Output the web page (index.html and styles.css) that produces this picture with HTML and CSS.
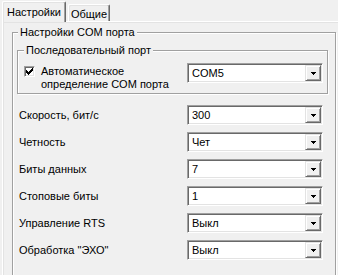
FILE: index.html
```html
<!DOCTYPE html>
<html lang="ru">
<head>
<meta charset="utf-8">
<title>Настройки COM порта</title>
<link rel="stylesheet" href="styles.css">
</head>
<body>
<div class="window">
  <div class="tabs">
    <div class="tab active">Настройки</div>
    <div class="tab">Общие</div>
  </div>
  <div class="panel">
    <fieldset class="group outer">
      <legend>Настройки COM порта</legend>
      <fieldset class="group inner">
        <legend>Последовательный порт</legend>
        <div class="port-row">
          <label class="check">
            <span class="box"><svg width="7" height="7" viewBox="0 0 7 7"><path d="M0 2h1v1h1v1h1v-1h1v-1h1v-1h1v-1h1v3h-1v1h-1v1h-1v1h-1v1h-1v-1h-1v-1h-1z" fill="#000"/></svg></span>
            <span class="check-text">Автоматическое<br>определение COM порта</span>
          </label>
          <div class="combo"><span class="value">COM5</span><span class="btn"><svg width="5" height="3" viewBox="0 0 5 3"><path d="M0 0h5v1h-1v1h-1v1h-1v-1h-1v-1h-1z" fill="#000"/></svg></span></div>
        </div>
      </fieldset>
      <div class="rows">
        <div class="row"><span class="label">Скорость, бит/с</span><div class="combo"><span class="value">300</span><span class="btn"><svg width="5" height="3" viewBox="0 0 5 3"><path d="M0 0h5v1h-1v1h-1v1h-1v-1h-1v-1h-1z" fill="#000"/></svg></span></div></div>
        <div class="row"><span class="label">Четность</span><div class="combo"><span class="value">Чет</span><span class="btn"><svg width="5" height="3" viewBox="0 0 5 3"><path d="M0 0h5v1h-1v1h-1v1h-1v-1h-1v-1h-1z" fill="#000"/></svg></span></div></div>
        <div class="row"><span class="label">Биты данных</span><div class="combo"><span class="value">7</span><span class="btn"><svg width="5" height="3" viewBox="0 0 5 3"><path d="M0 0h5v1h-1v1h-1v1h-1v-1h-1v-1h-1z" fill="#000"/></svg></span></div></div>
        <div class="row"><span class="label">Стоповые биты</span><div class="combo"><span class="value">1</span><span class="btn"><svg width="5" height="3" viewBox="0 0 5 3"><path d="M0 0h5v1h-1v1h-1v1h-1v-1h-1v-1h-1z" fill="#000"/></svg></span></div></div>
        <div class="row"><span class="label">Управление RTS</span><div class="combo"><span class="value">Выкл</span><span class="btn"><svg width="5" height="3" viewBox="0 0 5 3"><path d="M0 0h5v1h-1v1h-1v1h-1v-1h-1v-1h-1z" fill="#000"/></svg></span></div></div>
        <div class="row"><span class="label">Обработка "ЭХО"</span><div class="combo"><span class="value">Выкл</span><span class="btn"><svg width="5" height="3" viewBox="0 0 5 3"><path d="M0 0h5v1h-1v1h-1v1h-1v-1h-1v-1h-1z" fill="#000"/></svg></span></div></div>
      </div>
    </fieldset>
  </div>
</div>
</body>
</html>
```

FILE: styles.css
```css
* { box-sizing: border-box; }
html, body { margin: 0; padding: 0; }
html { overflow: hidden; }
body {
  width: 338px;
  height: 275px;
  overflow: hidden;
  background: #f0f0f0;
  font-family: "Liberation Sans", Arial, sans-serif;
  font-size: 11px;
  line-height: 13px;
  color: #000;
}
.window { padding-left: 2px; }
.tabs {
  display: flex;
  align-items: flex-end;
  height: 22px;
  margin-bottom: -1px;
  position: relative;
  z-index: 1;
}
.tab {
  height: 17px;
  width: 42px;
  margin: 0 0 1px 2px;
  padding-top: 3px;
  text-align: center;
  background: #f0f0f0;
  border-left: 1px solid #fff;
  border-top: 1px solid #fff;
  border-right: 1px solid #696969;
  border-radius: 2px 2px 0 0;
  box-shadow: inset -1px 0 0 #a0a0a0, inset 1px 1px 0 #e3e3e3;
}
.tab.active {
  height: 21px;
  width: 64px;
  margin: 0;
  padding-top: 4px;
}
.panel {
  width: 336px;
  height: 254px;
  overflow: hidden;
  border-top: 1px solid #fff;
  border-left: 1px solid #fff;
  box-shadow: inset 1px 1px 0 #e3e3e3;
  padding-top: 4px;
}
.group {
  margin: 0;
  min-inline-size: 0;
  border: 1px solid #a0a0a0;
  box-shadow: inset 1px 1px 0 #fff, 1px 1px 0 #fff;
}
.group legend {
  padding: 0 2px;
  background: #f0f0f0;
  line-height: 13px;
}
.outer {
  margin: 0 0 0 9px;
  width: 324px;
  padding: 5px 7px 30px 4px;
}
.outer > legend { margin-left: 1px; }
.inner {
  padding: 6px 4px 2px 6px;
}
.port-row {
  display: flex;
  align-items: flex-start;
}
.check {
  display: flex;
  align-items: flex-start;
  gap: 6px;
  margin-top: 2px;
}
.box {
  width: 11px;
  height: 11px;
  margin-top: 1px;
  background: #fff;
  border: 1px solid;
  border-color: #a0a0a0 #fff #fff #a0a0a0;
  box-shadow: inset 1px 1px 0 #696969, inset -1px -1px 0 #e3e3e3;
  display: flex;
  align-items: center;
  justify-content: center;
  flex: none;
}
.box svg { display: block; shape-rendering: crispEdges; }
.combo {
  width: 136px;
  height: 20px;
  margin-left: auto;
  display: flex;
  align-items: stretch;
  background: #fff;
  border: 1px solid;
  border-color: #a0a0a0 #fff #fff #a0a0a0;
  box-shadow: inset 1px 1px 0 #696969, inset -1px -1px 0 #e3e3e3;
  padding: 1px;
  flex: none;
}
.value {
  flex: 1;
  padding: 2px 0 0 3px;
  line-height: 13px;
}
.btn {
  width: 16px;
  background: #f0f0f0;
  border: 1px solid;
  border-color: #e3e3e3 #696969 #696969 #e3e3e3;
  box-shadow: inset 1px 1px 0 #fff, inset -1px -1px 0 #a0a0a0;
  display: flex;
  align-items: center;
  justify-content: center;
}
.btn svg { display: block; shape-rendering: crispEdges; }
.rows {
  margin-top: 11px;
  padding: 0 5px 0 2px;
  display: flex;
  flex-direction: column;
  gap: 7px;
}
.row {
  display: flex;
  align-items: center;
  height: 20px;
}
.label { padding-top: 1px; }
```
